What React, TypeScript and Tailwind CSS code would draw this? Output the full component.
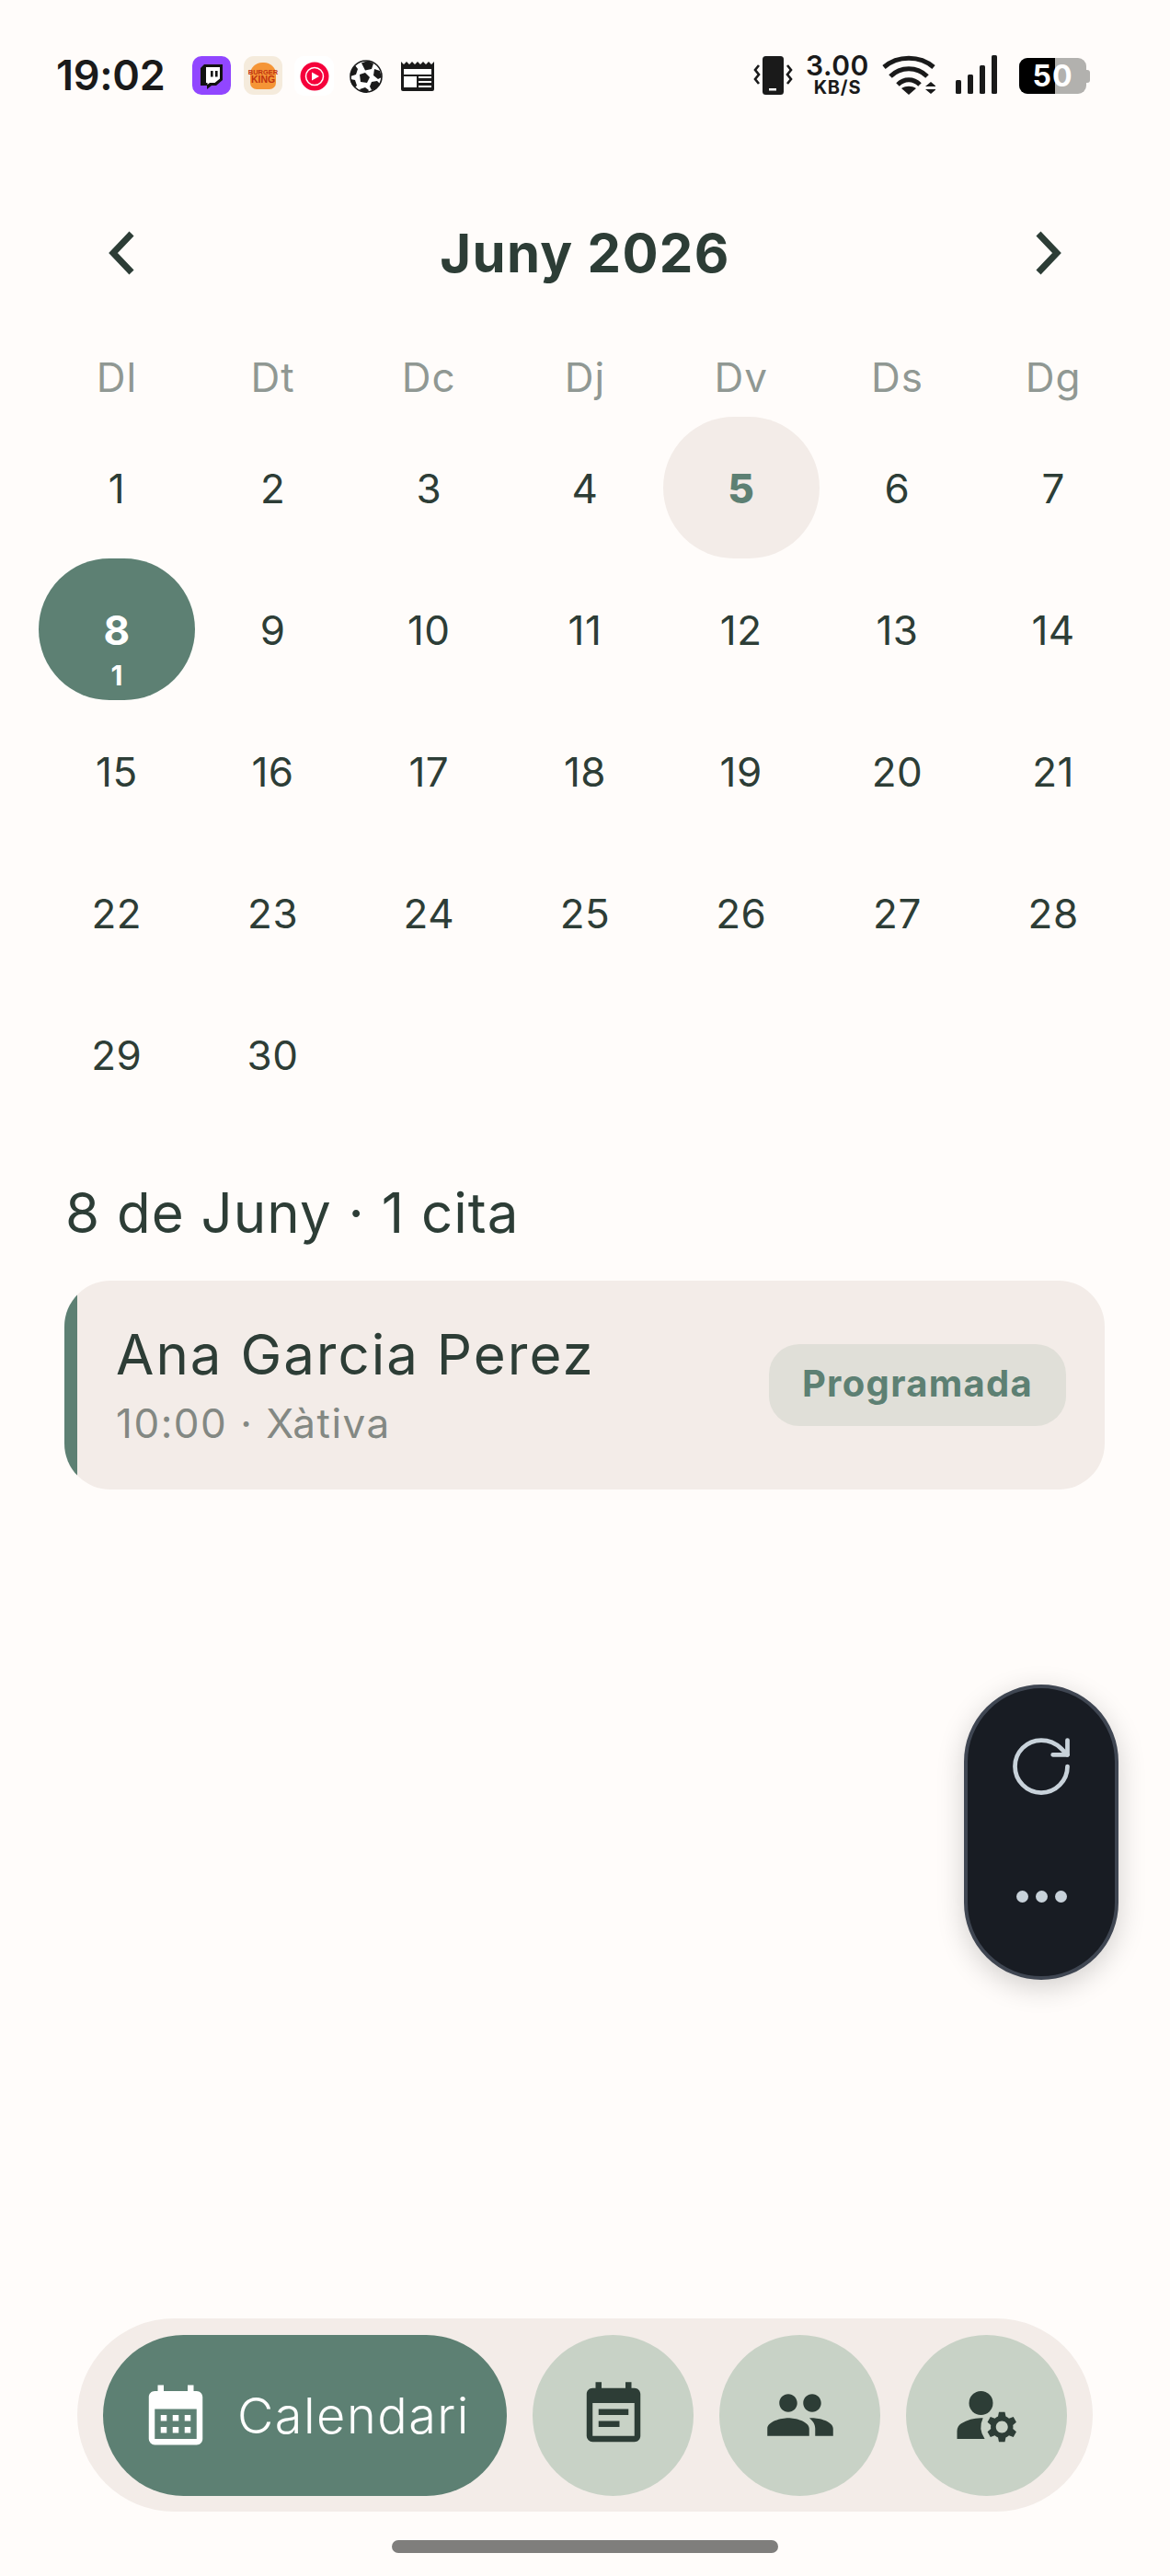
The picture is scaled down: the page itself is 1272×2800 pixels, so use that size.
import React from "react";
import { RotateCw } from "lucide-react";
import { MdCalendarMonth, MdEventNote, MdPeople, MdManageAccounts } from "react-icons/md";

const font = "font-['Inter','Liberation_Sans',sans-serif]";
const weekdays = ["Dl", "Dt", "Dc", "Dj", "Dv", "Ds", "Dg"];
const days = Array.from({ length: 30 }, (_, i) => i + 1);

function Day({ d }: { d: number }) {
  if (d === 8) {
    return (
      <div className="h-[154px] rounded-full bg-[#5d8073] flex flex-col items-center pt-[52px] text-white">
        <span className="text-[44px] leading-[52px] font-bold">8</span>
        <span className="mt-[7px] text-[30px] leading-[32px] font-bold">1</span>
      </div>
    );
  }
  if (d === 5) {
    return (
      <div className="h-[154px] rounded-full bg-[#f3ece8] flex items-center justify-center pt-[1px] text-[44px] font-extrabold text-[#5d8073]">
        5
      </div>
    );
  }
  return (
    <div className="h-[154px] flex items-center justify-center pt-[2px] text-[44px] font-normal tracking-[0.5px] text-[#2d3d36]">
      {d}
    </div>
  );
}

function StatusBar() {
  return (
    <div className="h-[164px] flex items-start text-[#1a1a1a]">
      <div className="ml-[61px] mt-[55px] w-[120px] text-[45px] leading-[54px] font-semibold tracking-[-0.3px] whitespace-nowrap">
        19:02
      </div>
      <div className="ml-[28px] mt-[61px] flex items-start">
        <div className="w-[42px] h-[42px] rounded-[10px] bg-[#9146ff] flex items-center justify-center">
          <svg width="24" height="27" viewBox="0 0 24 27" className="mt-[3px]">
            <path d="M4 0h20v17l-7 6h-5l-5 4v-4H0V4z" fill="#111" />
            <path d="M6 3h15v12.5L15.5 20H10l-2.5 2v-2H6z" fill="#fff" />
            <rect x="11" y="7" width="2.6" height="6.5" fill="#111" />
            <rect x="16" y="7" width="2.6" height="6.5" fill="#111" />
          </svg>
        </div>
        <div className="ml-[14px] w-[42px] h-[42px] rounded-[11px] bg-[#f5ebdc] flex items-center justify-center">
          <div className="w-[28px] h-[29px] rounded-t-[13px] rounded-b-[7px] bg-[#f59536] flex flex-col items-center justify-center font-['Liberation_Sans',sans-serif] font-bold text-[#c0320f] whitespace-nowrap">
            <span className="text-[7.5px] leading-[7px] mt-[2px]">BURGER</span>
            <span className="text-[10.5px] leading-[9px]">KING</span>
          </div>
        </div>
        <div className="ml-[13px] w-[43px] h-[43px] rounded-[10px] bg-white flex items-center justify-center">
          <svg width="32" height="32" viewBox="0 0 32 32">
            <circle cx="16" cy="16" r="15.5" fill="#f5003b" />
            <circle cx="16" cy="16" r="9.5" fill="none" stroke="#fff" strokeWidth="1.5" />
            <path d="M13 11.5l8 4.5-8 4.5z" fill="#fff" />
          </svg>
        </div>
        <svg className="ml-[17px] mt-[4px]" width="36" height="36" viewBox="0 0 36 36">
          <circle cx="18" cy="18" r="17" fill="#fff" stroke="#1a1a1a" strokeWidth="1.6" />
          <path d="M13 3.5l7-2.5 6 3-2 6-7 1.5z" fill="#1a1a1a" />
          <path d="M27 10l6 2 2 7-4 2-5-4z" fill="#1a1a1a" />
          <path d="M11 16l6-2 5 5-3 6-7-1z" fill="#1a1a1a" />
          <path d="M6 6l3 4-2 6-6 2c0-5 2-9 5-12z" fill="#1a1a1a" />
          <path d="M1 21l5 1 2 6-2 2c-3-2-5-5-5-9z" fill="#1a1a1a" />
          <path d="M24 24l6-1 3 3-4 6-5 1-2-4z" fill="#1a1a1a" />
          <path d="M11 32l6-2 4 3-2 3c-3 0-6-1-8-4z" fill="#1a1a1a" />
        </svg>
        <svg className="ml-[20px] mt-[6px]" width="36" height="32" viewBox="0 0 36 32">
          <path d="M0 0l3 3 3-3 3 3 3-3 3 3 3-3 3 3 3-3 3 3 3-3 3 3 3-3v30a2 2 0 0 1-2 2H2a2 2 0 0 1-2-2z" fill="#1a1a1a" />
          <rect x="3" y="8" width="30" height="6" fill="#fff" />
          <rect x="3" y="16" width="14" height="12" fill="#fff" />
          <rect x="19" y="16" width="14" height="2" fill="#fff" />
          <rect x="19" y="21" width="14" height="2" fill="#fff" />
          <rect x="19" y="26" width="14" height="2" fill="#fff" />
        </svg>
      </div>
      <div className="ml-auto mr-[87px] mt-[60px] flex items-start">
        <svg width="43" height="43" viewBox="0 0 43 43">
          <rect x="10" y="1" width="23" height="42" rx="3.5" fill="#1a1a1a" />
          <rect x="17" y="36" width="8" height="2.5" fill="#fff" />
          <path d="M6 11l-4 5 4 5-4 5 4 5M37 11l4 5-4 5 4 5-4 5" fill="none" stroke="#1a1a1a" strokeWidth="2.6" />
        </svg>
        <div className="ml-[14px] w-[69px] flex flex-col items-center font-bold leading-none">
          <span className="text-[30px] leading-[22px] font-semibold tracking-[0.5px]">3.00</span>
          <span className="mt-[4px] text-[20px] leading-[18px] tracking-[0.8px]">KB/S</span>
        </div>
        <svg className="ml-[14px]" width="58" height="43" viewBox="0 0 58 43">
          <path d="M2 13C17 0 41 0 56 13M9 23C20 12 38 12 49 23" fill="none" stroke="#1a1a1a" strokeWidth="5" />
          <path d="M17 32c7-7 17-7 24 0" fill="none" stroke="#1a1a1a" strokeWidth="5" />
          <path d="M29 43l-8-7c5-3 11-3 16 0z" fill="#1a1a1a" />
          <path d="M47 34l6-5 6 5zM47 37l6 5 6-5z" fill="#1a1a1a" />
        </svg>
        <div className="ml-[22px] h-[42px] flex items-end gap-[7px]">
          <div className="w-[6px] h-[15px] rounded-[1.5px] bg-[#1a1a1a]" />
          <div className="w-[6px] h-[21px] rounded-[1.5px] bg-[#1a1a1a]" />
          <div className="w-[6px] h-[31px] rounded-[1.5px] bg-[#1a1a1a]" />
          <div className="w-[6px] h-[42px] rounded-[1.5px] bg-[#1a1a1a]" />
        </div>
        <div className="ml-[24px] mt-[3px] flex items-center">
          <div className="relative w-[73px] h-[39px] rounded-[9px] overflow-hidden bg-[#b2b1ae] flex items-center justify-center">
            <div className="absolute inset-y-0 left-0 w-[39px] bg-black" />
            <span className="relative text-white text-[32px] leading-none font-bold tracking-[1px]">50</span>
          </div>
          <div className="w-[4px] h-[14px] rounded-r-[3px] bg-[#b2b1ae]" />
        </div>
      </div>
    </div>
  );
}

function NavCircle({ children }: { children: React.ReactNode }) {
  return (
    <div className="w-[175px] h-[175px] rounded-full bg-[#c8d2c6] flex items-center justify-center text-[#2d3d36]">
      {children}
    </div>
  );
}

export default function App() {
  return (
    <div className={`${font} relative w-[1272px] h-[2800px] bg-[#fffcfa] flex flex-col overflow-hidden`}>
      <StatusBar />

      <div className="mx-[117px] h-[74px] mt-[74px] flex items-center justify-between text-[#2d3d36]">
        <svg width="29" height="48" viewBox="0 0 29 48">
          <path d="M26 3L6 24l20 21" fill="none" stroke="currentColor" strokeWidth="7" />
        </svg>
        <h1 className="text-[58px] leading-none font-bold tracking-[1.3px]">Juny 2026</h1>
        <svg width="29" height="48" viewBox="0 0 29 48">
          <path d="M3 3l20 21L3 45" fill="none" stroke="currentColor" strokeWidth="7" />
        </svg>
      </div>

      <div className="mx-[42px] mt-[63px] grid grid-cols-7 h-[70px]">
        {weekdays.map((w) => (
          <div key={w} className="flex items-center justify-center text-[44px] tracking-[1px] text-[#909893]">
            {w}
          </div>
        ))}
      </div>

      <div className="mx-[42px] mt-[8px] grid grid-cols-7">
        {days.map((d) => (
          <Day key={d} d={d} />
        ))}
      </div>

      <div className="ml-[71px] mt-[59px] text-[60px] leading-[72px] tracking-[1px] text-[#2d3d36]">8 de Juny · 1 cita</div>

      <div className="ml-[70px] mr-[71px] mt-[38px] h-[227px] rounded-[50px] bg-[#f3ece8] overflow-hidden flex items-stretch">
        <div className="w-[14px] bg-[#5d8073]" />
        <div className="flex-1 flex items-center pl-[42px] pr-[42px]">
          <div className="flex flex-col">
            <span className="text-[60px] leading-[72px] tracking-[2px] text-[#2d3d36]">Ana Garcia Perez</span>
            <span className="mt-[11px] text-[44px] leading-[56px] tracking-[1.5px] text-[#838883]">10:00 · Xàtiva</span>
          </div>
          <div className="ml-auto w-[323px] h-[89px] rounded-[33px] bg-[#e0dfd8] flex items-center justify-center pb-[3px] text-[40px] tracking-[1.3px] font-bold text-[#5d8073]">
            Programada
          </div>
        </div>
      </div>

      <div className="mt-auto ml-[84px] mr-[84px] h-[210px] rounded-full bg-[#f3ece8] flex items-center pl-[28px] pr-[28px] gap-[28px]">
        <div className="w-[439px] h-[175px] rounded-full bg-[#5d8073] flex items-center pl-[40px] text-white">
          <MdCalendarMonth size={78} />
          <span className="ml-[28px] text-[54px] font-light tracking-[1.5px]">Calendari</span>
        </div>
        <NavCircle>
          <MdEventNote size={78} />
        </NavCircle>
        <NavCircle>
          <MdPeople size={78} />
        </NavCircle>
        <NavCircle>
          <MdManageAccounts size={78} />
        </NavCircle>
      </div>

      <div className="mt-[31px] mb-[25px] mx-auto w-[420px] h-[14px] rounded-full bg-[#7f7e7c]" />

      <div className="absolute left-[1048px] top-[1831px] w-[168px] h-[321px] rounded-full bg-[#181c23] border-[4px] border-[#3f4652] shadow-[0_8px_30px_rgba(0,0,0,0.18)] flex flex-col items-center text-[#c8d2da]">
        <RotateCw size={76} strokeWidth={1.5} className="mt-[47px]" />
        <div className="mt-[97px] flex gap-[8px]">
          <div className="w-[13px] h-[13px] rounded-full bg-[#c8d2da]" />
          <div className="w-[13px] h-[13px] rounded-full bg-[#c8d2da]" />
          <div className="w-[13px] h-[13px] rounded-full bg-[#c8d2da]" />
        </div>
      </div>
    </div>
  );
}
